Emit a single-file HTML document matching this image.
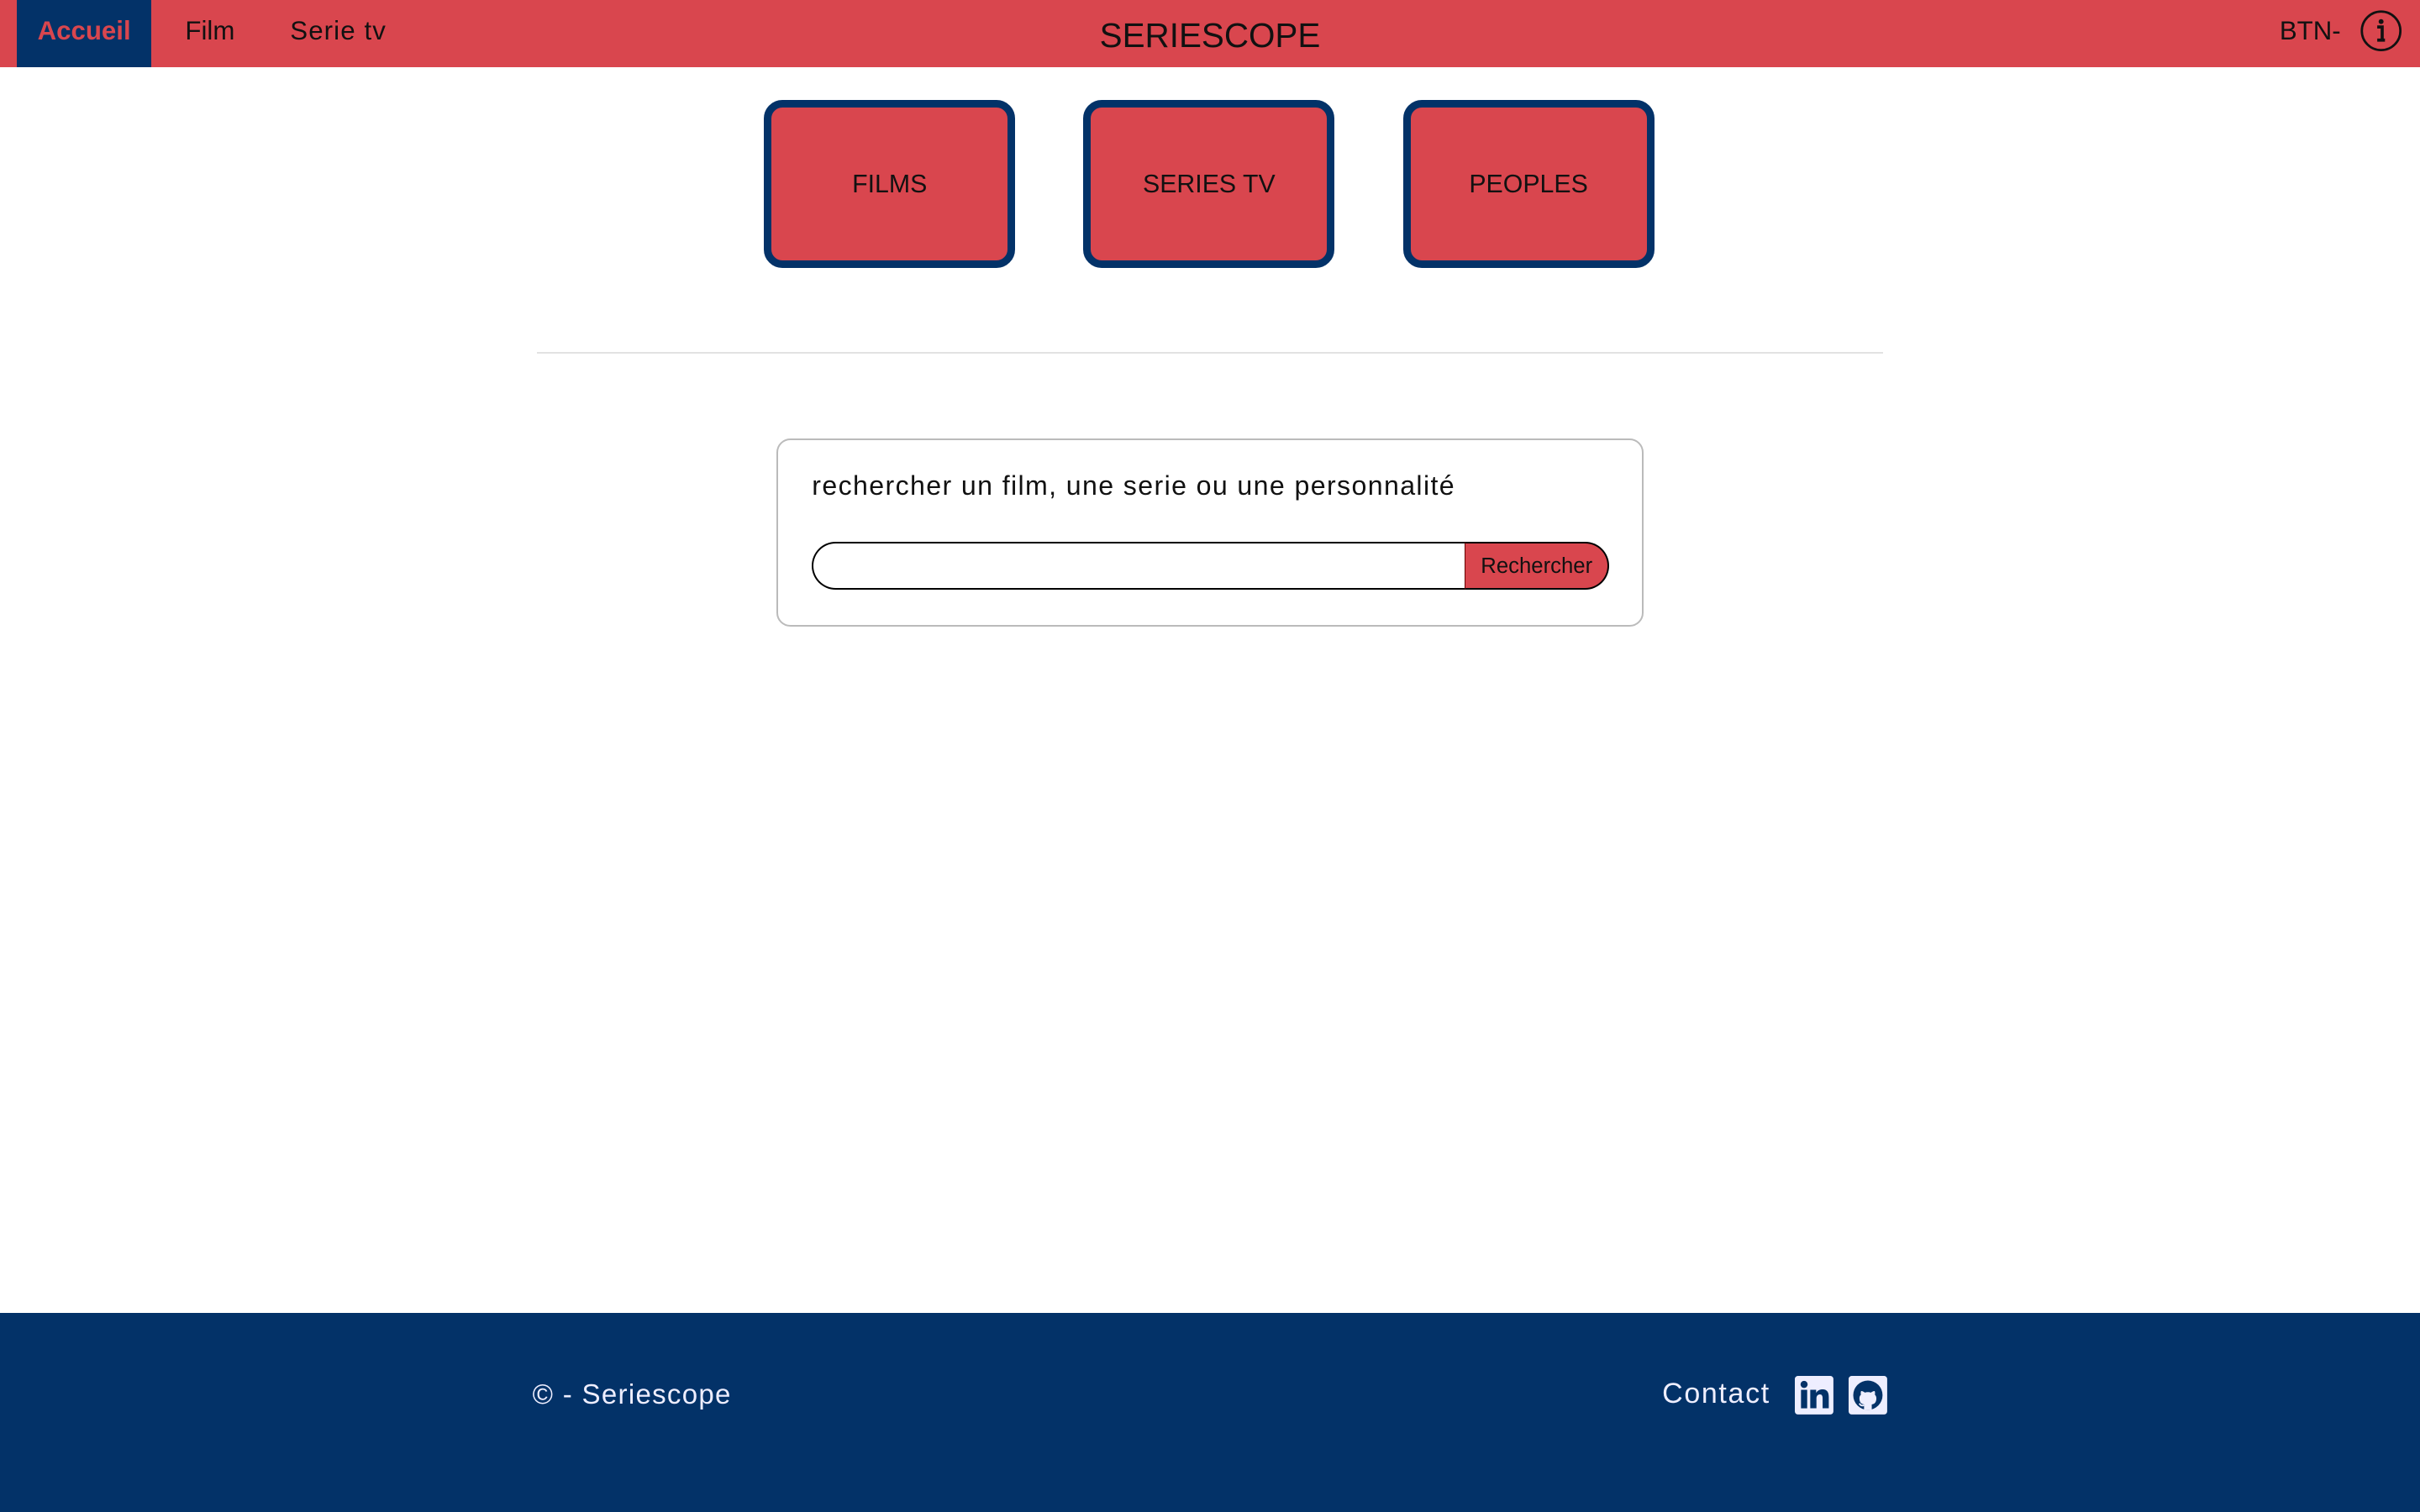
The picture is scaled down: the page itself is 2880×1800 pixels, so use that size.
<!DOCTYPE html>
<html><head><meta charset="utf-8"><style>
html{zoom:1.83673}
body{margin:0;width:1568px;height:980px;position:relative;overflow:hidden;background:#fff;font-family:"Liberation Sans",sans-serif;color:#111}
.hdr{position:absolute;left:0;top:0;width:1568px;height:43.5px;background:#d9464e}
.acc{position:absolute;left:11px;top:0;width:87px;height:43.5px;background:#033268;color:#d9464e;font-weight:bold;font-size:17px;line-height:40px;text-align:center}
.nav{position:absolute;top:0;line-height:40px;font-size:17px;color:#111}
.title{position:absolute;left:0;width:1568px;text-align:center;top:0;line-height:46px;font-size:22px}
.card{position:absolute;top:65px;width:153px;height:99px;border:5px solid #033268;border-radius:12px;background:#d9464e;font-size:16.5px;text-align:center;line-height:100px}
.hr{position:absolute;left:348px;top:228px;width:872px;height:1px;background:#e2e2e2}
.box{position:absolute;left:503px;top:284px;width:560px;height:120px;border:1.5px solid #bbb;border-radius:9px}
.lbl{position:absolute;left:22px;top:20px;font-size:17.5px;letter-spacing:0.75px}
.inp{position:absolute;left:22px;top:66px;width:422px;height:29px;border:1.5px solid #000;border-right:none;border-radius:16px 0 0 16px}
.btn{position:absolute;left:445px;top:66px;width:92px;height:29px;border:1.5px solid #000;border-left:1px solid #600;border-radius:0 16px 16px 0;background:#d9464e;font-size:14px;line-height:30px;text-align:center}
.ftr{position:absolute;left:0;top:851px;width:1568px;height:129px;background:#033268;color:#eef}
</style></head><body>
<div class="hdr">
<div class="acc">Accueil</div>
<div class="nav" style="left:120px">Film</div>
<div class="nav" style="left:188px;letter-spacing:0.6px">Serie tv</div>
<div class="title">SERIESCOPE</div>
<div class="nav" style="left:1477px">BTN-</div>
<svg style="position:absolute;left:1529px;top:6px" width="28" height="28" viewBox="0 0 28 28"><circle cx="14" cy="14" r="12.5" fill="none" stroke="#111" stroke-width="1.5"/><circle cx="14" cy="8" r="1.6" fill="#111"/><path d="M11.5 11.5h3.2v8.5M11.5 20h5" stroke="#111" stroke-width="2" fill="none"/></svg>
</div>
<div class="card" style="left:495px">FILMS</div>
<div class="card" style="left:702px">SERIES TV</div>
<div class="card" style="left:909px">PEOPLES</div>
<div class="hr"></div>
<div class="box">
<div class="lbl">rechercher un film, une serie ou une personnalité</div>
<div class="inp"></div>
<div class="btn">Rechercher</div>
</div>
<div class="ftr">
<div style="position:absolute;left:345px;top:43px;font-size:18px;letter-spacing:0.7px">© - Seriescope</div>
<div style="position:absolute;left:1077px;top:42px;font-size:18.5px;letter-spacing:0.9px">Contact</div>
<svg style="position:absolute;left:1163px;top:41px" width="25" height="25" viewBox="0 0 25 25"><rect width="25" height="25" rx="2" fill="#eef"/><rect x="4" y="9" width="4" height="12" fill="#033268"/><circle cx="6" cy="5.5" r="2.3" fill="#033268"/><path d="M10 9h3.8v2c1-1.7 2.5-2.3 4.2-2.3 3 0 4 2 4 5V21h-4v-6.5c0-1.6-.5-2.5-1.8-2.5S14 13 14 14.6V21h-4z" fill="#033268"/></svg>
<svg style="position:absolute;left:1198px;top:41px" width="25" height="25" viewBox="0 0 25 25"><rect width="25" height="25" rx="2" fill="#eef"/><circle cx="12.5" cy="12.5" r="9.5" fill="#033268"/><path d="M10 22v-3.5c-2-.3-3-1.6-3-4 0-1 .4-1.8 1-2.4-.2-.6-.2-1.5.1-2.3 1 0 1.8.5 2.4 1a7 7 0 0 1 4 0c.6-.5 1.4-1 2.4-1 .3.8.3 1.7.1 2.3.6.6 1 1.4 1 2.4 0 2.4-1 3.7-3 4V22z" fill="#eef"/><path d="M10 19c-1.5.5-2.5 0-3-1.2" stroke="#eef" stroke-width="1" fill="none"/></svg>
</div>
</body></html>
